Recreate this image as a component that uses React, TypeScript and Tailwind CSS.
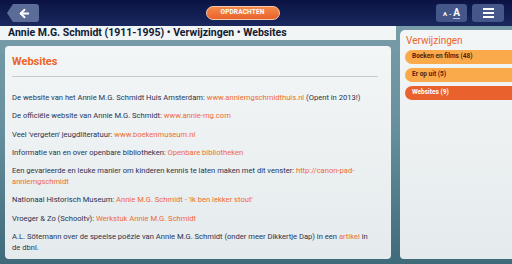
import { ArrowLeft } from "lucide-react";

const links = [
  {
    pre: "De website van het Annie M.G. Schmidt Huis Amsterdam: ",
    link: "www.anniemgschmidthuis.nl",
    post: " (Opent in 2013!)",
  },
  { pre: "De officiële website van Annie M.G. Schmidt: ", link: "www.annie-mg.com" },
  { pre: "Veel 'vergeten' jeugdliteratuur: ", link: "www.boekenmuseum.nl" },
  {
    pre: "Informatie van en over openbare bibliotheken: ",
    link: "Openbare bibliotheken",
  },
  {
    pre: "Een gevarieerde en leuke manier om kinderen kennis te laten maken met dit venster: ",
    link: "http://canon-pad-anniemgschmidt",
  },
  {
    pre: "Nationaal Historisch Museum: ",
    link: "Annie M.G. Schmidt - 'Ik ben lekker stout'",
  },
  { pre: "Vroeger & Zo (Schooltv): ", link: "Werkstuk Annie M.G. Schmidt" },
  {
    pre: "A.L. Sötemann over de speelse poëzie van Annie M.G. Schmidt (onder meer Dikkertje Dap) in een ",
    link: "artikel",
    post: " in de dbnl.",
  },
];

const refs = [
  { label: "Boeken en films (48)" },
  { label: "Er op uit (5)" },
  { label: "Websites (9)", active: true },
];

export default function App() {
  return (
    <div className="flex h-[264px] w-[512px] flex-col overflow-hidden bg-gradient-to-b from-[#7d9fab] via-[#668f9d] to-[#3f6a7a] font-['Roboto',sans-serif]">
      {/* Top bar */}
      <header className="flex h-[26px] shrink-0 items-center bg-gradient-to-b from-[#0b1343] to-[#1a2960] px-[7px]">
        <button
          type="button"
          className="flex h-[18px] w-[32px] items-center justify-center rounded-r-[3px] bg-[#5c6c99] [clip-path:polygon(6px_0,100%_0,100%_100%,6px_100%,0_50%)]"
        >
          <ArrowLeft className="ml-[2px] size-[13px] text-white" strokeWidth={3.5} />
        </button>
        <div className="flex flex-1 justify-center pl-[10px]">
          <span className="flex h-[14px] w-[74px] items-center justify-center rounded-full border border-[#f6c7a8] bg-gradient-to-b from-[#f58a4a] to-[#e9622a] text-[6.5px] font-bold tracking-wide text-white">
            OPDRACHTEN
          </span>
        </div>
        <div className="flex items-center gap-[5px] pr-[1px]">
          <span className="flex h-[18px] w-[31px] items-center justify-center gap-[2px] rounded-[3px] bg-[#45568a] font-bold text-white">
            <span className="text-[6px]">A</span>
            <span className="text-[6px]">-</span>
            <span className="border-b border-[#b8c0dc] text-[10px] leading-[11px]">A</span>
          </span>
          <span className="flex h-[18px] w-[32px] flex-col items-center justify-center gap-[2px] rounded-[3px] bg-[#45568a]">
            <span className="h-[2px] w-[11px] bg-white" />
            <span className="h-[2px] w-[11px] bg-white" />
            <span className="h-[2px] w-[11px] bg-white" />
          </span>
        </div>
      </header>

      <div className="flex min-h-0 flex-1 pb-[5px]">
        {/* Left column */}
        <div className="flex w-[396px] flex-col">
          <div className="flex h-[14px] items-center bg-[#f1f5f6] pl-[8px] text-[10.5px] font-bold text-[#111a33]">
            Annie M.G. Schmidt (1911-1995) • Verwijzingen • Websites
          </div>
          <main className="mx-[5px] mt-[6px] flex-1 rounded-[4px] bg-gradient-to-b from-[#f3f6f7] to-[#e5ebed]">
            <h1 className="ml-[7px] mr-[13px] border-b border-[#c9ccca] pt-[8px] pb-[5px] text-[11px] font-bold text-[#ec6428]">
              Websites
            </h1>
            <div className="flex flex-col gap-[7.25px] pl-[7px] pr-[22px] pt-[15.5px] text-[7.6px] leading-[11px] text-[#2b3350]">
              {links.map((l) => (
                <p key={l.link}>
                  {l.pre}
                  <span className="text-[#ee6a36]">{l.link}</span>
                  {l.post}
                </p>
              ))}
            </div>
          </main>
        </div>

        {/* Right panel */}
        <aside className="ml-[4px] mt-[4px] flex-1 rounded-tl-[5px] rounded-bl-[4px] bg-gradient-to-b from-[#f3f6f7] to-[#e5ebed] pl-[5px] pt-[4px]">
          <h2 className="pl-[1px] text-[10px] leading-[13px] text-[#ee6428]">Verwijzingen</h2>
          <div className="mt-[3px] flex flex-col gap-[4px]">
            {refs.map((r) => (
              <span
                key={r.label}
                className={
                  r.active
                    ? "flex h-[14px] items-center rounded-l-full bg-[#e9622e] pl-[7px] text-[6.5px] font-bold text-white"
                    : "flex h-[14px] items-center rounded-l-full bg-[#fbaa4b] pl-[7px] text-[6.5px] font-bold text-[#4f2410]"
                }
              >
                {r.label}
              </span>
            ))}
          </div>
        </aside>
      </div>
    </div>
  );
}
